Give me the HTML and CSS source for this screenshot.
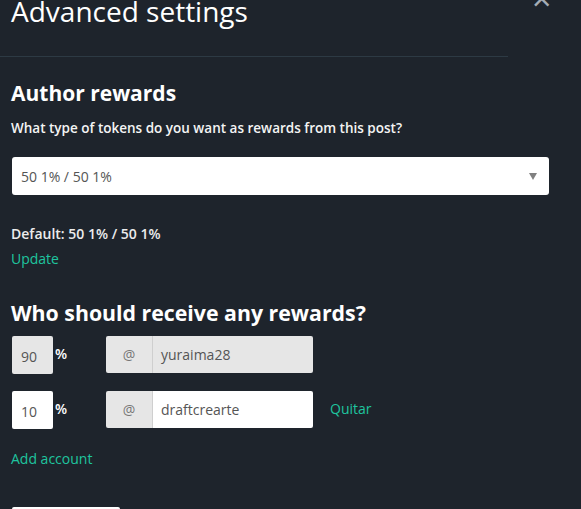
FILE: index.html
```html
<!DOCTYPE html>
<html lang="en">
<head>
    <meta charset="UTF-8">
    <meta name="viewport" content="width=device-width, initial-scale=1.0">
    <title>Advanced settings</title>
    <link rel="stylesheet" href="styles.css">
</head>
<body>

<div class="modal">
    <div class="modal-header">
        <h1 class="modal-title">Advanced settings</h1>
        <span class="close-btn">&times;</span>
    </div>

    <div class="modal-body">
        <h2 class="section-title">Author rewards</h2>
        <p class="hint">What type of tokens do you want as rewards from this post?</p>

        <div class="select-box">
            <span>50 1% / 50 1%</span>
            <span class="caret"></span>
        </div>

        <p class="default-text">Default: 50 1% / 50 1%</p>
        <a class="link" href="#">Update</a>

        <h2 class="section-title second">Who should receive any rewards?</h2>

        <div class="beneficiary">
            <div class="percent disabled">90</div>
            <span class="pct-sign">%</span>
            <div class="input-group">
                <span class="addon">@</span>
                <div class="account disabled">yuraima28</div>
            </div>
        </div>

        <div class="beneficiary">
            <div class="percent">10</div>
            <span class="pct-sign">%</span>
            <div class="input-group">
                <span class="addon">@</span>
                <div class="account">draftcrearte</div>
            </div>
            <a class="link remove" href="#">Quitar</a>
        </div>

        <a class="link add" href="#">Add account</a>

        <div class="save-btn"></div>
    </div>
</div>

</body>
</html>
```

FILE: styles.css
```css
body {
    margin: 0;
    background-color: #1e242c;
    font-family: "Open Sans", "Liberation Sans", sans-serif;
    color: #ffffff;
    overflow: hidden;
}
.modal {
    width: 566px;
    height: 509px;
    overflow: hidden;
}
.modal-header {
    display: flow-root;
    position: relative;
    width: 508px;
    height: 56px;
    border-bottom: 1px solid #2d3a44;
}
.modal-title {
    margin: -3px 0 0 11px;
    font-size: 28px;
    font-weight: normal;
    line-height: 28px;
}
.close-btn {
    position: absolute;
    left: 532px;
    top: -19px;
    font-size: 34px;
    line-height: 34px;
    color: #a3acb5;
}
.modal-body {
    padding-left: 11px;
}
.section-title {
    margin: 22px 0 0;
    font-size: 21px;
    font-weight: bold;
    line-height: 28px;
}
.section-title.second {
    margin-top: 30px;
    font-size: 21.3px;
}
.hint {
    margin: 12px 0 0;
    font-size: 13.5px;
    font-weight: 600;
    line-height: 18px;
    color: #f4f4f4;
}
.select-box {
    display: flex;
    justify-content: space-between;
    align-items: center;
    box-sizing: border-box;
    width: 537px;
    height: 38px;
    margin: 20px 0 0 1px;
    padding: 0 12px 0 9px;
    background: #ffffff;
    border-radius: 3px;
    color: #555;
    font-size: 14px;
}
.caret {
    width: 0;
    height: 0;
    border-left: 4px solid transparent;
    border-right: 4px solid transparent;
    border-top: 7px solid #808080;
}
.default-text {
    margin: 29px 0 0;
    font-size: 14px;
    font-weight: 600;
    line-height: 20px;
    color: #ececec;
}
.link {
    display: block;
    color: #1ec59f;
    font-size: 14px;
    line-height: 20px;
    text-decoration: none;
    margin-top: 5px;
}
.beneficiary {
    display: flex;
    align-items: flex-start;
    margin: 9px 0 0 1px;
}
.beneficiary + .beneficiary {
    margin-top: 17px;
}
.percent {
    box-sizing: border-box;
    width: 41px;
    height: 38px;
    padding: 11px 0 0 9px;
    background: #ffffff;
    border-radius: 2px;
    color: #555;
    font-size: 14px;
    line-height: 20px;
}
.percent.disabled,
.account.disabled {
    background: #e6e6e6;
}
.pct-sign {
    margin: 8px 0 0 2px;
    width: 51px;
    font-size: 14px;
    font-weight: 600;
    line-height: 20px;
}
.input-group {
    display: flex;
    width: 207px;
    height: 37px;
    border-radius: 2px;
    overflow: hidden;
}
.addon {
    width: 46px;
    background: #e6e6e6;
    border-right: 1px solid #cfcfcf;
    color: #777;
    font-size: 14px;
    text-align: center;
    line-height: 37px;
}
.account {
    flex: 1;
    padding-left: 8px;
    background: #ffffff;
    color: #555;
    font-size: 14px;
    line-height: 37px;
}
.remove {
    margin: 8px 0 0 17px;
}
.add {
    margin-top: 20px;
}
.save-btn {
    width: 108px;
    height: 30px;
    margin: 38px 0 0 1px;
    background: #ffffff;
    border-radius: 2px;
}
```
